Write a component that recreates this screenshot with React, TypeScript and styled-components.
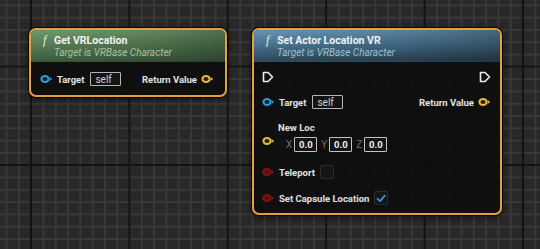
import styled, { createGlobalStyle } from "styled-components";

const GlobalStyle = createGlobalStyle`
  html, body {
    margin: 0;
    padding: 0;
    background: #262626;
  }
  body {
    font-family: Roboto, "Liberation Sans", sans-serif;
  }
`;

const Canvas = styled.div`
  position: relative;
  width: 540px;
  height: 249px;
  overflow: hidden;
  background-color: #282828;
  background-image:
    linear-gradient(to right, #121212 0 2px, transparent 2px),
    linear-gradient(to bottom, #121212 0 2px, transparent 2px),
    linear-gradient(to right, #383838 0 2px, transparent 2px),
    linear-gradient(to bottom, #383838 0 2px, transparent 2px);
  background-size: 98.4px 98.4px, 98.4px 98.4px, 12.3px 12.3px, 12.3px 12.3px;
  background-position: 30px 0, 0 65.6px, 5.6px 0, 0 4.4px;
`;

const Node = styled.div<{ $x: number; $y: number; $w: number; $h: number }>`
  position: absolute;
  left: ${(p) => p.$x}px;
  top: ${(p) => p.$y}px;
  width: ${(p) => p.$w}px;
  height: ${(p) => p.$h}px;
  box-sizing: border-box;
  border: 2px solid #e3a139;
  border-radius: 7px;
  background: rgba(15, 15, 15, 0.96);
  box-shadow: 0 0 0 1px rgba(0, 0, 0, 0.7), 0 2px 6px rgba(0, 0, 0, 0.6);
  overflow: hidden;
  display: flex;
  flex-direction: column;
`;

const tones = {
  green: {
    bg: "linear-gradient(90deg, rgba(0,0,0,0) 0%, rgba(0,0,0,0.12) 60%, rgba(0,0,0,0.28) 100%), linear-gradient(180deg, #6f9b6b 0%, #587f55 45%, #3e5d3f 100%)",
    sub: "#a9c2a2",
  },
  blue: {
    bg: "linear-gradient(90deg, rgba(0,0,0,0) 0%, rgba(0,0,0,0.12) 60%, rgba(0,0,0,0.3) 100%), linear-gradient(180deg, #6594b3 0%, #4a7592 45%, #2b4759 100%)",
    sub: "#a3bfd0",
  },
};

const Header = styled.div<{ $tone: keyof typeof tones }>`
  height: 32px;
  flex-shrink: 0;
  box-sizing: border-box;
  padding: 4px 0 0 12px;
  background: ${(p) => tones[p.$tone].bg};
  border-bottom: 1px solid rgba(0, 0, 0, 0.45);
  color: ${(p) => tones[p.$tone].sub};
`;

const TitleRow = styled.div`
  display: flex;
  align-items: center;
  height: 13px;
`;

const Fn = styled.span`
  flex: 0 0 11px;
  font-family: "Liberation Serif", serif;
  font-style: italic;
  font-size: 12px;
  color: #e6eee4;
`;

const Title = styled.span`
  font-size: 10.5px;
  font-weight: 700;
  color: #f2f2f2;
  line-height: 13px;
`;

const Subtitle = styled.div`
  padding-left: 11px;
  font-size: 10px;
  font-style: italic;
  line-height: 12px;
  color: inherit;
`;

const Body = styled.div<{ $pl: number; $pr: number; $pt: number }>`
  display: flex;
  flex-direction: column;
  padding: ${(p) => p.$pt}px ${(p) => p.$pr}px 0 ${(p) => p.$pl}px;
`;

const Row = styled.div<{ $mt?: number }>`
  display: flex;
  align-items: center;
  justify-content: space-between;
  height: 14px;
  margin-top: ${(p) => p.$mt ?? 0}px;
`;

const Side = styled.div`
  display: flex;
  align-items: center;
  gap: 4px;
`;

const Label = styled.span`
  font-size: 9.5px;
  font-weight: 700;
  color: #e2e2e2;
  white-space: nowrap;
`;

const TextBox = styled.span`
  display: inline-flex;
  align-items: center;
  box-sizing: border-box;
  width: 31px;
  height: 14px;
  padding-left: 4px;
  margin-left: 2px;
  border: 1px solid #b5b5b5;
  border-radius: 1px;
  background: #141414;
  font-size: 10px;
  color: #d0d0d0;
`;

const VecBlock = styled.div<{ $mt: number }>`
  display: flex;
  align-items: center;
  gap: 3px;
  margin-top: ${(p) => p.$mt}px;
`;

const VecCol = styled.div`
  display: flex;
  flex-direction: column;
`;

const VecLabel = styled.div`
  height: 12px;
  line-height: 12px;
  margin-top: -8px;
  font-size: 9.5px;
  font-weight: 700;
  color: #e2e2e2;
`;

const VecRow = styled.div`
  display: flex;
  align-items: center;
  height: 14px;
  margin-top: 3px;
  padding-left: 8px;
`;

const Axis = styled.span`
  font-size: 10px;
  color: #6f6f6f;
  margin: 0 2px 0 4px;
  &:first-child {
    margin-left: 0;
  }
`;

const NumBox = styled.span`
  display: inline-flex;
  align-items: center;
  justify-content: center;
  box-sizing: border-box;
  width: 23px;
  height: 15px;
  border: 1px solid #c4c4c4;
  border-radius: 1px;
  background: #141414;
  font-size: 9.5px;
  font-weight: 700;
  color: #f0f0f0;
`;

const Check = styled.span`
  display: inline-flex;
  align-items: center;
  justify-content: center;
  box-sizing: border-box;
  width: 14px;
  height: 14px;
  margin-left: 1px;
  border: 1px solid #2c2c2c;
  border-radius: 2px;
  background: #151515;
`;

type PinKind = "object" | "vector" | "bool";

const pinColors: Record<PinKind, { stroke: string; fill: string }> = {
  object: { stroke: "#2b9bd8", fill: "#0e2431" },
  vector: { stroke: "#e5bb3c", fill: "#2a220a" },
  bool: { stroke: "#7a1414", fill: "#5c0c0c" },
};

function Pin({ kind }: { kind: PinKind }) {
  const c = pinColors[kind];
  return (
    <svg width="13" height="10" viewBox="0 0 13 10" style={{ flexShrink: 0 }}>
      {kind === "bool" && <ellipse cx="5" cy="5" rx="5" ry="4.2" fill="rgba(120,10,10,0.35)" />}
      <ellipse cx="5" cy="5" rx="3.6" ry="3" fill={c.fill} stroke={c.stroke} strokeWidth="2" />
      <polygon points="9.6,3 12.2,5 9.6,7" fill={c.stroke} />
    </svg>
  );
}

function Exec() {
  return (
    <svg width="12" height="12" viewBox="0 0 12 12" style={{ flexShrink: 0 }}>
      <path
        d="M1.5 1.5 H6 L10.5 6 L6 10.5 H1.5 Z"
        fill="none"
        stroke="#ececec"
        strokeWidth="1.6"
        strokeLinejoin="round"
      />
    </svg>
  );
}

function CheckMark() {
  return (
    <svg width="10" height="9" viewBox="0 0 10 9">
      <path d="M1.5 4.8 L4 7.2 L8.8 1.6" fill="none" stroke="#3d8fe0" strokeWidth="1.8" strokeLinecap="round" strokeLinejoin="round" />
    </svg>
  );
}

export default function App() {
  return (
    <>
      <GlobalStyle />
      <Canvas>
        <Node $x={29} $y={28} $w={198} $h={69}>
          <Header $tone="green">
            <TitleRow>
              <Fn>f</Fn>
              <Title>Get VRLocation</Title>
            </TitleRow>
            <Subtitle>Target is VRBase Character</Subtitle>
          </Header>
          <Body $pl={9} $pr={11} $pt={10}>
            <Row>
              <Side>
                <Pin kind="object" />
                <Label>Target</Label>
                <TextBox>self</TextBox>
              </Side>
              <Side>
                <Label>Return Value</Label>
                <Pin kind="vector" />
              </Side>
            </Row>
          </Body>
        </Node>

        <Node $x={252} $y={28} $w={250} $h={187}>
          <Header $tone="blue">
            <TitleRow>
              <Fn>f</Fn>
              <Title>Set Actor Location VR</Title>
            </TitleRow>
            <Subtitle>Target is VRBase Character</Subtitle>
          </Header>
          <Body $pl={8} $pr={9} $pt={8}>
            <Row>
              <Exec />
              <Exec />
            </Row>
            <Row $mt={11}>
              <Side>
                <Pin kind="object" />
                <Label>Target</Label>
                <TextBox>self</TextBox>
              </Side>
              <Side>
                <Label>Return Value</Label>
                <Pin kind="vector" />
              </Side>
            </Row>
            <VecBlock $mt={21}>
              <Pin kind="vector" />
              <VecCol>
                <VecLabel>New Loc</VecLabel>
                <VecRow>
                  <Axis>X</Axis>
                  <NumBox>0.0</NumBox>
                  <Axis>Y</Axis>
                  <NumBox>0.0</NumBox>
                  <Axis>Z</Axis>
                  <NumBox>0.0</NumBox>
                </VecRow>
              </VecCol>
            </VecBlock>
            <Row $mt={14}>
              <Side>
                <Pin kind="bool" />
                <Label>Teleport</Label>
                <Check />
              </Side>
            </Row>
            <Row $mt={12}>
              <Side>
                <Pin kind="bool" />
                <Label>Set Capsule Location</Label>
                <Check>
                  <CheckMark />
                </Check>
              </Side>
            </Row>
          </Body>
        </Node>
      </Canvas>
    </>
  );
}
